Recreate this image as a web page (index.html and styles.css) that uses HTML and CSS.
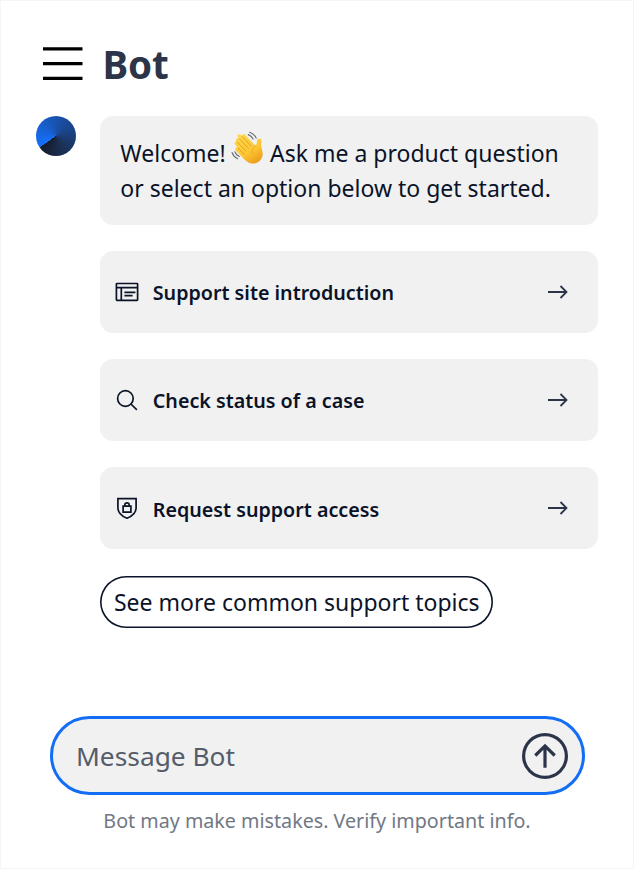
FILE: index.html
```html
<!DOCTYPE html>
<html lang="en">
<head>
<meta charset="utf-8">
<title>Bot</title>
<link rel="stylesheet" href="styles.css">
</head>
<body>
<main class="panel">
  <header class="header">
    <button class="menu" aria-label="Menu"><svg width="40" height="34" viewBox="0 0 40 34"><path d="M0 1.9h39.5M0 16.6h39.5M0 31.4h39.5" stroke="#000" stroke-width="3.2"/></svg></button>
    <h1 class="title">Bot</h1>
  </header>
  <section class="chat">
    <div class="avatar"></div>
    <div class="messages">
      <p class="bubble">Welcome! <svg class="wave" width="34" height="34" viewBox="0 0 34 34">
        <defs><linearGradient id="skin" x1="0.2" y1="0" x2="0.8" y2="1"><stop offset="0" stop-color="#ffd84d"/><stop offset=".6" stop-color="#fcc532"/><stop offset="1" stop-color="#e99a1b"/></linearGradient></defs>
        <path d="M5.4 7.7C6.5 6.7 7.7 7.1 8.7 8.2L6.7 5.9C5.7 4.2 8.1 2.3 9.6 3.8L11.2 5.5C10.1 3.8 12.5 2 13.9 3.5L23.4 13.7C24.5 14.7 25.6 14.2 25.7 12.8L25.9 10C26 7.6 28.4 6.7 30 8.2C31.2 9.4 30.1 11.3 30.1 13.3C30 16.5 32.2 20.2 31.5 24.4C30.7 29.7 25.4 33.2 20.5 32.5C16.7 32 14.1 29.3 11.5 26.5L4.8 19.6C3.2 17.7 5.3 15.6 7.1 17.1L4.1 13.8C2.4 11.8 4.7 9.8 6.4 11.4L5.5 10.4C4.7 9.5 4.6 8.5 5.4 7.7Z" fill="url(#skin)"/>
        <path d="M6.1 10.9L14.7 19.8M8.3 7.7L17.2 17.1M11 5.4L20 14.9M6.9 17L13.1 23.1" fill="none" stroke="#dc941b" stroke-width=".8" stroke-linecap="round"/>
        <path d="M25 14.2C22 17 20.4 19.1 20.9 22.7" fill="none" stroke="#e9a51f" stroke-width=".8"/>
        <path d="M17.2 3.6Q20.3 4.5 22.1 8.1M18.7 1.2Q23.3 2.8 25.2 7.1M1.1 21.6Q2.6 26 6.6 27.7M3.8 20.7Q5 24 8.3 25.5" fill="none" stroke="#62676c" stroke-width="1.1" stroke-linecap="round"/>
      </svg> Ask me a product question<br>or select an option below to get started.</p>
      <button class="option">
        <svg class="icon" width="26" height="26" viewBox="0 0 26 26"><path d="M3 4.5h20q.6 0 .6.6v15.6q0 .6-.6.6H3q-.6 0-.6-.6V5.1q0-.6.6-.6ZM2.4 8.7h21.2M7.3 8.7v12.6M10.4 13.4h11M10.4 16.7h8.2"/></svg>
        <span class="label">Support site introduction</span>
        <svg class="arrow" width="22" height="16" viewBox="0 0 22 16"><path d="M1 8h18.5M13.5 2l6 6-6 6"/></svg>
      </button>
      <button class="option">
        <svg class="icon" width="26" height="26" viewBox="0 0 26 26"><circle cx="11.4" cy="11.5" r="7.8"/><path d="M16.9 17l6 5.8"/></svg>
        <span class="label">Check status of a case</span>
        <svg class="arrow" width="22" height="16" viewBox="0 0 22 16"><path d="M1 8h18.5M13.5 2l6 6-6 6"/></svg>
      </button>
      <button class="option">
        <svg class="icon" width="26" height="26" viewBox="0 0 26 26"><path d="M3.9 3.6h18.2v9.2c0 5.2-4.2 8.5-9.1 10.4-4.9-1.9-9.1-5.2-9.1-10.4ZM9.1 11.1h7.8v6.1H9.1ZM10.9 11.1V9.6c0-2.4 4.2-2.4 4.2 0v1.5"/></svg>
        <span class="label">Request support access</span>
        <svg class="arrow" width="22" height="16" viewBox="0 0 22 16"><path d="M1 8h18.5M13.5 2l6 6-6 6"/></svg>
      </button>
      <button class="more">See more common support topics</button>
    </div>
  </section>
  <footer class="composer">
    <div class="field">
      <span class="placeholder">Message Bot</span>
      <svg class="send" width="46" height="46" viewBox="0 0 46 46"><circle cx="23" cy="23" r="21.4"/><path d="M23 34.7V13.5M13.3 22.5L23 12.9l9.7 9.6"/></svg>
    </div>
    <p class="note">Bot may make mistakes. Verify important info.</p>
  </footer>
</main>
</body>
</html>
```
FILE: styles.css
```css
* { box-sizing: border-box; }
body {
  margin: 0;
  background: #fff;
  font-family: "Noto Sans", sans-serif;
  color: #0b1328;
}
button {
  font: inherit;
  color: inherit;
  border: 0;
  margin: 0;
  padding: 0;
  background: none;
}
svg { display: block; flex: none; }
.panel {
  width: 634px;
  height: 869px;
  border: 1px solid #f5f5f5;
  overflow: hidden;
}
.header {
  display: flex;
  align-items: center;
  height: 115px;
  padding: 10px 0 0 42px;
  gap: 19.6px;
}
.title {
  margin: 0;
  padding-top: 1px;
  font-size: 38.6px;
  font-weight: 700;
  line-height: 50px;
  letter-spacing: -0.2px;
  color: #2b3448;
}
.chat {
  display: flex;
  gap: 24.3px;
  padding-left: 35px;
}
.avatar {
  width: 40px;
  height: 40px;
  border-radius: 50%;
  background: conic-gradient(from 235deg, #1570fa, #1c3158 75%, #161c2b 100%);
}
.messages {
  width: 497.4px;
  display: flex;
  flex-direction: column;
  align-items: flex-start;
}
.bubble {
  width: 100%;
  height: 108.5px;
  margin: 0 0 26.5px;
  padding: 20px;
  border-radius: 13px;
  background: #f1f1f1;
  font-size: 23px;
  line-height: 34.5px;
  white-space: nowrap;
}
.wave {
  display: inline-block;
  vertical-align: 1px;
  margin: -12px -0.7px -4px -1px;
}
.option {
  display: flex;
  align-items: center;
  width: 100%;
  height: 81.6px;
  margin-bottom: 26.6px;
  padding: 0 29px 0 13.7px;
  border-radius: 13px;
  background: #f1f1f1;
}
.icon, .arrow {
  fill: none;
  stroke: #0b1328;
  stroke-width: 1.7;
}
.arrow { stroke: #2b3448; stroke-width: 1.8; }
.label {
  flex: 1;
  margin-left: 12.8px;
  text-align: left;
  font-size: 19.7px;
  font-weight: 600;
  line-height: 30px;
  padding-top: 3px;
}
.more {
  width: 393px;
  height: 52.5px;
  box-shadow: inset 0 0 0 1.6px #0b1328;
  border-radius: 27px;
  font-size: 23px;
  white-space: nowrap;
}
.composer { padding: 88px 48.5px 0; }
.field {
  display: flex;
  align-items: center;
  justify-content: space-between;
  width: 535px;
  height: 79px;
  padding: 0 13.5px 0 23.5px;
  border: 3px solid #136ef6;
  border-radius: 40px;
  background: #f1f1f1;
}
.placeholder {
  padding-top: 1px;
  font-size: 26.3px;
  color: #555c69;
}
.send {
  fill: none;
  stroke: #2b3448;
  stroke-width: 3.2;
}
.note {
  margin: 11px 0 0;
  text-align: center;
  font-size: 19.7px;
  line-height: 30px;
  color: #717885;
  white-space: nowrap;
}
```
